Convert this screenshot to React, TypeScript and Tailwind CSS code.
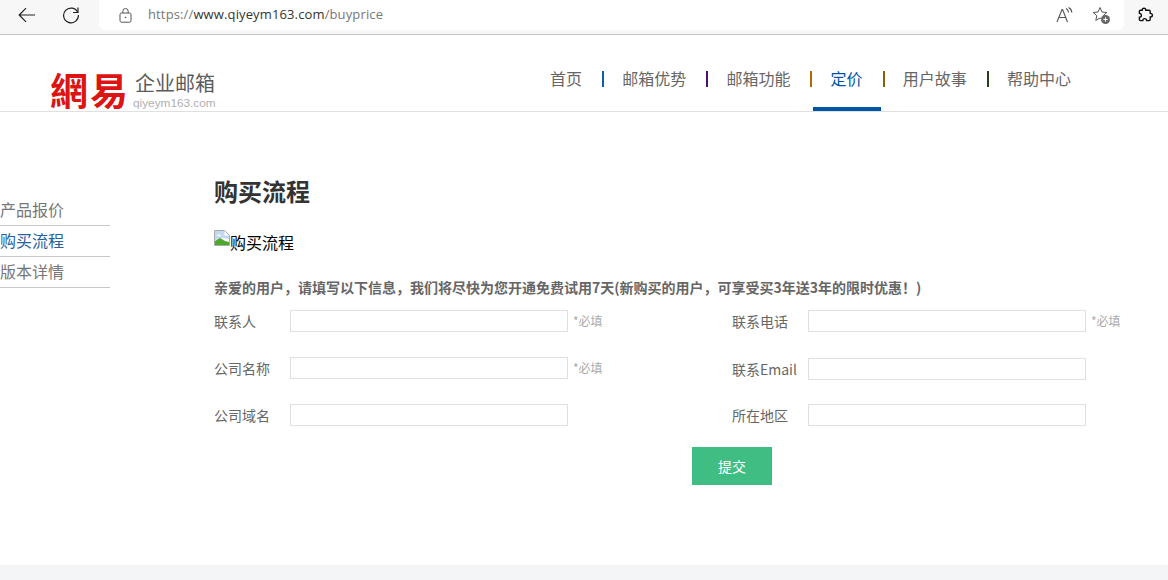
import React from 'react';

const FONT = 'font-["Noto_Sans_CJK_SC","Noto_Sans",sans-serif]';

const navItems = [
  { label: '首页', sep: 'bg-[#0b5fa8]' },
  { label: '邮箱优势', sep: 'bg-[#4a1268]' },
  { label: '邮箱功能', sep: 'bg-[#b06a00]' },
  { label: '定价', sep: 'bg-[#8a6200]', active: true },
  { label: '用户故事', sep: 'bg-[#23401a]' },
  { label: '帮助中心' },
];

const BrowserBar = () => (
  <div className="flex h-[35px] items-start border-b border-[#c6c6c6] bg-[#f7f7f7]">
    <div className="flex h-[30px] w-[99px] shrink-0 items-center">
      <svg className="ml-[18px]" width="18" height="16" viewBox="0 0 18 16" fill="none" stroke="#222" strokeWidth="1.2">
        <path d="M17 8H1.5M8 1.2 1.2 8 8 14.8" />
      </svg>
      <svg className="ml-[26px]" width="18" height="18" viewBox="0 0 18 18" fill="none" stroke="#222" strokeWidth="1.2">
        <path d="M15.8 6.5A7.4 7.4 0 1 0 16.4 9" />
        <path d="M16 1.5v5h-5" />
      </svg>
    </div>
    <div className="flex h-[30px] w-[1025px] shrink-0 items-center rounded-b-[6px] bg-white">
      <svg className="ml-[20px]" width="13" height="15" viewBox="0 0 13 15" fill="none" stroke="#555" strokeWidth="1">
        <rect x="1" y="5" width="11" height="9.2" rx="1.5" />
        <path d="M3.8 5V3.2a2.7 2.7 0 0 1 5.4 0V5" />
        <circle cx="6.5" cy="9.5" r=".8" fill="#555" stroke="none" />
      </svg>
      <div className="ml-[16px] font-['Open_Sans',sans-serif] text-[13px] tracking-[0.01em] text-[#777]">
        https://<span className="text-[#333]">www.qiyeym163.com</span>/buyprice
      </div>
      <svg className="ml-auto" width="18" height="16" viewBox="0 0 18 16" fill="none" stroke="#555" strokeWidth="1.1">
        <path d="M1 15 6 2.5h.6L11.5 15M2.8 10.5h7" />
        <path d="M10 1.5c1.6.8 2.5 2.2 2.5 4M12.6.6c2 1.1 3.2 2.8 3.2 5" />
      </svg>
      <svg className="ml-[18px] mr-[13px]" width="19" height="19" viewBox="0 0 19 19" fill="none">
        <path d="M8 1.5 10 6l4.8.5-3.6 3.2 1 4.7L8 12l-4.2 2.4 1-4.7L1.2 6.5 6 6z" stroke="#555" strokeWidth="1" />
        <circle cx="13.5" cy="13.5" r="4.5" fill="#666" />
        <path d="M13.5 11.3v4.4M11.3 13.5h4.4" stroke="#fff" strokeWidth="1" />
      </svg>
    </div>
    <div className="flex h-[30px] flex-1 items-center justify-center">
      <svg width="16" height="16" viewBox="0 0 16 16" fill="none" stroke="#111" strokeWidth="1.4">
        <path d="M6 1.2c1.2 0 1.8.8 1.8 2h3.4c.6 0 1 .4 1 1v2.2c1.4 0 2.2.7 2.2 1.8s-.8 1.8-2.2 1.8v2.6c0 .6-.4 1-1 1H8.6c0-1.2-.8-2-1.9-2s-1.9.8-1.9 2H2.4c-.6 0-1-.4-1-1v-2.4c1.2 0 2-.8 2-1.9s-.8-1.9-2-1.9V4.2c0-.6.4-1 1-1h1.8c0-1.2.6-2 1.8-2z" />
      </svg>
    </div>
  </div>
);

const Logo = () => (
  <div className="flex items-end pb-px pl-[50px]">
    <div className="font-['Noto_Sans_CJK_TC',sans-serif] text-[38px] leading-[42px] font-semibold tracking-[2px] whitespace-nowrap text-[#dc1414]">
      網易
    </div>
    <div className="ml-[3px] flex flex-col">
      <span className="mb-[2px] pl-[2px] text-[20px] leading-[24px] text-[#5c5c5c]">企业邮箱</span>
      <span className="font-['Liberation_Sans',sans-serif] text-[11.8px] leading-[13px] text-[#b0b0b0]">qiyeym163.com</span>
    </div>
  </div>
);

const Nav = () => (
  <nav className="flex h-full items-start pr-[79px]">
    {navItems.map((item) => (
      <React.Fragment key={item.label}>
        <a
          className={`flex h-full items-start border-b-4 px-[18px] pt-[30px] text-[16px] leading-[26px] whitespace-nowrap ${
            item.active ? 'border-[#0054a6] text-[#0054a6]' : 'border-transparent text-[#666]'
          }`}
        >
          {item.label}
        </a>
        {item.sep && <span className={`mt-[36px] mr-[0.2px] ml-[2px] h-[16px] w-[2px] shrink-0 ${item.sep}`} />}
      </React.Fragment>
    ))}
  </nav>
);

const Sidebar = () => (
  <ul className="mt-[83px] w-[110px] shrink-0 text-[16px] text-[#777]">
    <li className="h-[31px] border-b border-[#c8c8c8] leading-[28px]">产品报价</li>
    <li className="h-[31px] border-b border-[#c8c8c8] leading-[28px] text-[#2a5f9e]">购买流程</li>
    <li className="h-[31px] border-b border-[#c8c8c8] leading-[28px]">版本详情</li>
  </ul>
);

const Field = ({ label, required, className = '' }: { label: string; required?: boolean; className?: string }) => (
  <div className={`flex h-[22px] items-center ${className}`}>
    <label className="w-[76px] shrink-0 text-[14px] whitespace-nowrap text-[#666]">{label}</label>
    <input className="h-[22px] w-[278px] border border-[#e0e0e0] bg-white outline-none" />
    {required && <span className="ml-[5px] text-[12px] whitespace-nowrap text-[#aaa]">*必填</span>}
  </div>
);

const BrokenImage = () => (
  <div className="mt-[20px] flex h-[28px] items-start">
    <svg width="16" height="16" viewBox="0 0 16 16" className="mt-px shrink-0">
      <path d="M.5.5h10l5 5v10H.5z" fill="#fff" stroke="#a9a9a9" />
      <path d="M1 1h9.5v4.5H15V9L9 8 1 10z" fill="#c4d8f2" />
      <path d="M1 15v-4l5-3 5 3 4 1v3z" fill="#4ea82e" />
      <path d="M3 6c1-2 3-2 4 0z" fill="#fff" />
    </svg>
    <span className="text-[16px] leading-[26px] text-black">购买流程</span>
  </div>
);

const App = () => (
  <div className={`${FONT} flex h-[580px] w-[1168px] flex-col overflow-hidden bg-white`}>
    <BrowserBar />
    <header className="flex h-[77px] shrink-0 items-end justify-between border-b border-[#e0e0e0]">
      <Logo />
      <Nav />
    </header>
    <main className="flex flex-1">
      <Sidebar />
      <section className="ml-[104px] w-[920px]">
        <h1 className="mt-[61px] text-[24px] leading-[36px] font-bold text-[#333]">购买流程</h1>
        <BrokenImage />
        <p className="mt-[20px] text-[14px] leading-[20px] font-bold whitespace-nowrap text-[#666]">
          亲爱的用户，请填写以下信息，我们将尽快为您开通免费试用7天(新购买的用户，可享受买3年送3年的限时优惠！)
        </p>
        <div className="mt-[13px] grid grid-cols-[518px_1fr]">
          <Field label="联系人" required />
          <Field label="联系电话" required />
          <Field label="公司名称" required className="mt-[25px]" />
          <Field label="联系Email" className="mt-[26px]" />
          <Field label="公司域名" className="mt-[24px]" />
          <Field label="所在地区" className="mt-[24px]" />
        </div>
        <button className="mt-[21px] ml-[478px] block h-[38px] w-[80px] bg-[#3fbd82] text-[14px] text-white">提交</button>
      </section>
    </main>
    <div className="h-[15px] shrink-0 bg-[#f4f5f7]" />
  </div>
);

export default App;
